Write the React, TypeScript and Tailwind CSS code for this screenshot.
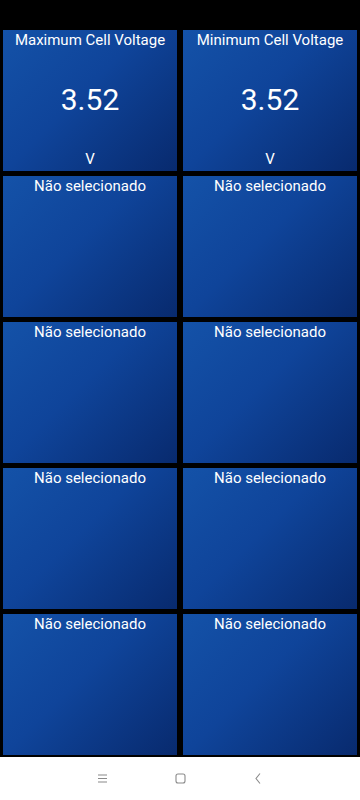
const cells = [
  { title: 'Maximum Cell Voltage', value: '3.52', unit: 'V' },
  { title: 'Minimum Cell Voltage', value: '3.52', unit: 'V' },
  ...Array.from({ length: 8 }, () => ({ title: 'Não selecionado', value: '', unit: '' })),
]

function Cell({ title, value, unit }: { title: string; value: string; unit: string }) {
  return (
    <div className="flex h-[141px] flex-col items-center bg-[linear-gradient(135deg,#1452a8_0%,#0f449a_45%,#082a6e_100%)] text-white">
      <div className="pt-[1px] text-[15px] leading-[19px]">{title}</div>
      <div className="flex flex-1 items-center text-[30px] leading-none">{value}</div>
      <div className="pb-[2px] text-[15px] leading-[19px]">{unit}</div>
    </div>
  )
}

export default function App() {
  return (
    <div className="flex h-[800px] w-[360px] flex-col bg-black font-['Roboto',sans-serif]">
      <div className="h-[30px]" />
      <div className="grid grid-cols-2 gap-x-[6px] gap-y-[5px] px-[3px]">
        {cells.map((c, i) => (
          <Cell key={i} {...c} />
        ))}
      </div>
      <div className="h-[2px]" />
      <div className="flex flex-1 items-center justify-center gap-[58px] bg-white text-[#8a8a8a]">
        <div className="flex w-[20px] justify-center">
          <svg width="11" height="9" viewBox="0 0 11 9" fill="none" stroke="currentColor" strokeWidth="1.1">
            <path d="M1 1h9M1 4.5h9M1 8h9" />
          </svg>
        </div>
        <div className="flex w-[20px] justify-center">
          <svg width="11" height="11" viewBox="0 0 11 11" fill="none" stroke="currentColor" strokeWidth="1.1">
            <rect x="1" y="1" width="9" height="9" rx="2" />
          </svg>
        </div>
        <div className="flex w-[20px] justify-center">
          <svg width="8" height="13" viewBox="0 0 8 13" fill="none" stroke="currentColor" strokeWidth="1.1">
            <path d="M6 1.5L2 6.5l4 5" />
          </svg>
        </div>
      </div>
    </div>
  )
}
